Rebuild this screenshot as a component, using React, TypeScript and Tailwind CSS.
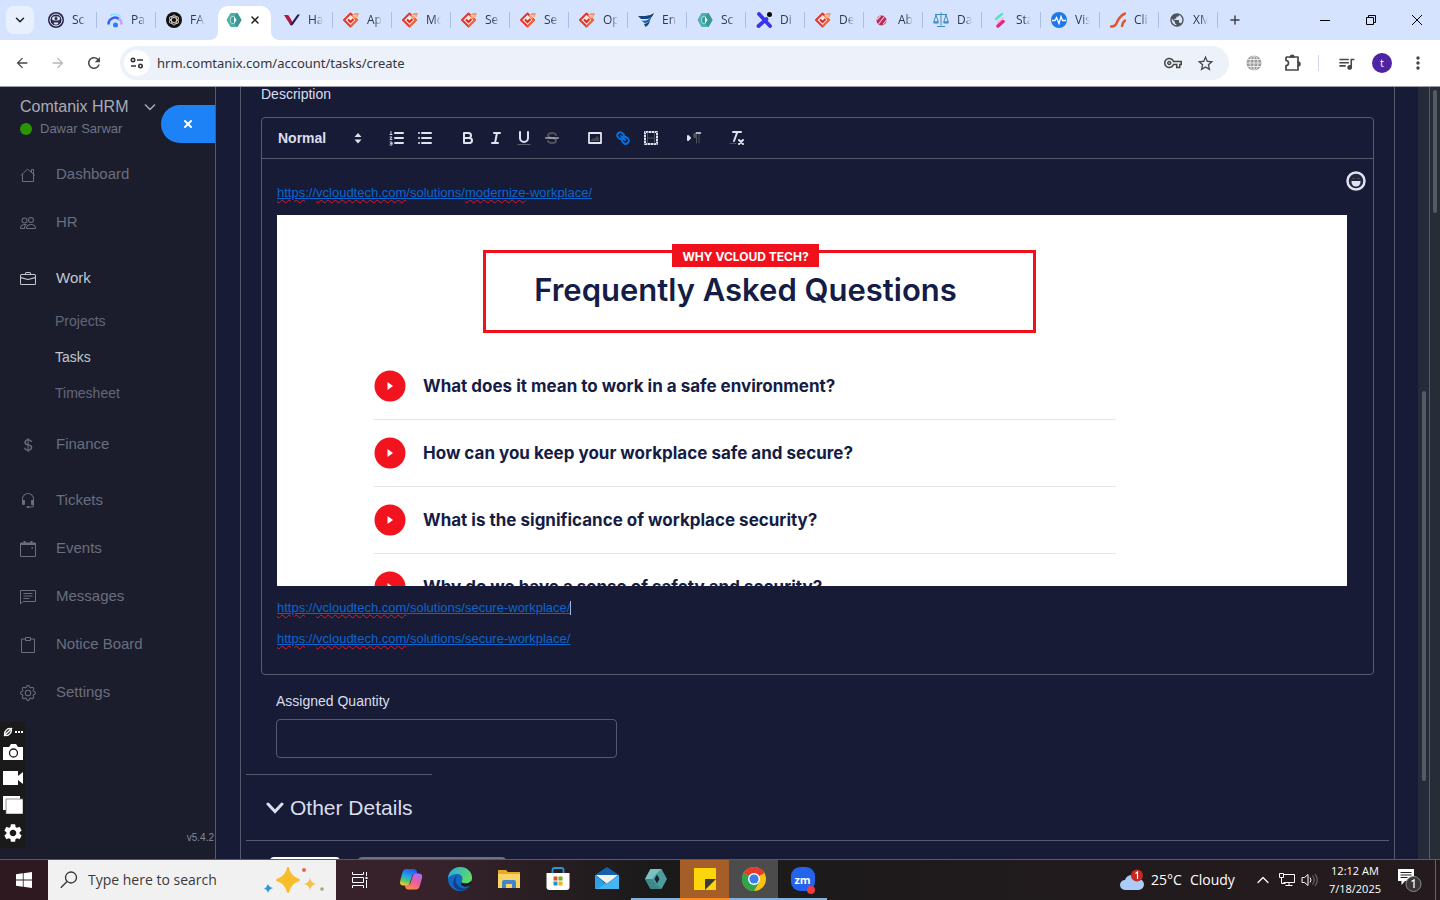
import type { ReactNode } from "react";
import { BsBriefcase, BsCurrencyDollar, BsGear, BsHeadset, BsPeople } from "react-icons/bs";
import {
  MdArrowBack,
  MdArrowForward,
  MdMoreVert,
  MdOutlineVpnKey,
  MdPublic,
  MdQueueMusic,
  MdRefresh,
  MdSettings,
  MdStarBorder,
} from "react-icons/md";
import { ChevronDown, ChevronUp, Plus, X } from "lucide-react";

/* ---------- favicons ---------- */

const GitIcon = () => (
  <svg viewBox="0 0 16 16" className="size-4">
    <path d="M7.500 1.500 14 8l-6.500 6.500L1 8z" fill="#fbe9e4" stroke="#e2362f" strokeWidth="2" strokeLinejoin="round" />
    <path d="M7.500 14.500 14 8l-2.500-2.500" fill="none" stroke="#ee6a3c" strokeWidth="2" />
    <path d="M5 7.500l2.500 2.500L10.500 7" stroke="#de2b26" strokeWidth="2" fill="none" />
    <path d="M8.500 4 12 1h4l-1.500 4-3 1.500z" fill="#f39a6c" />
    <path d="M10 3.500h3.500M11 5h3" stroke="#fbe0d2" strokeWidth="0.700" />
  </svg>
);

const HexIcon = () => (
  <svg viewBox="0 0 16 16" className="size-4">
    <path d="M4.500 1h7L15.500 8l-4 7h-7L.5 8z" fill="#4fb0ac" />
    <path d="M11.500 1 15.500 8l-4 7-3.500-3 2.500-4L8 4z" fill="#3c9793" />
    <path d="M8 4a4 4 0 0 0 0 8l2.500-4z" fill="#eefafa" />
    <path d="M8 4.500a3.500 3.500 0 0 0 0 7z" fill="#3c9f9b" />
  </svg>
);

const RobotIcon = () => (
  <svg viewBox="0 0 16 16" className="size-4">
    <circle cx="8" cy="8" r="8" fill="#25284f" />
    <circle cx="8" cy="8" r="6" fill="none" stroke="#e8eaf5" strokeWidth="1" />
    <path d="M4 6.500Q4 4.500 6 4.500h4q2 0 2 2t-2 2H6q-2 0-2-2z" fill="#e8eaf5" />
    <path d="M5.500 10.500h5l-1 2h-3z" fill="#e8eaf5" />
    <circle cx="8" cy="6.500" r="1.500" fill="#25284f" />
  </svg>
);

const GaugeIcon = () => (
  <svg viewBox="0 0 16 16" className="size-4">
    <path d="M1.500 12.500a6.500 6.500 0 0 1 11-5" fill="none" stroke="#2f62f5" strokeWidth="2.500" />
    <path d="M11.500 6.500a6.500 6.500 0 0 1 3 6" fill="none" stroke="#c9a0f5" strokeWidth="2.500" />
    <path d="M3 3.500Q8 .5 14 4.500" fill="none" stroke="#8fe0fa" strokeWidth="1.500" />
    <circle cx="8.500" cy="13" r="2.500" fill="#2b7df7" />
  </svg>
);

const GptIcon = () => (
  <svg viewBox="0 0 16 16" className="size-4">
    <circle cx="8" cy="8" r="8" fill="#111" />
    <g fill="none" stroke="#d8cfc4" strokeWidth="0.900">
      <ellipse cx="8" cy="8" rx="2.500" ry="5" />
      <ellipse cx="8" cy="8" rx="2.500" ry="5" transform="rotate(60 8 8)" />
      <ellipse cx="8" cy="8" rx="2.500" ry="5" transform="rotate(120 8 8)" />
    </g>
  </svg>
);

const VeeIcon = () => (
  <svg viewBox="0 0 16 16" className="size-4">
    <path d="M0 3h3.500q1 0 1.500 1l3.500 6-1 2.500q-.5 1-1.500 0z" fill="#b01743" />
    <path d="M13.500 2.500H16L9 12.500q-1.500 1.500-3 .5z" fill="#2a1a55" />
  </svg>
);

const WingIcon = () => (
  <svg viewBox="0 0 16 16" className="size-4">
    <path d="M0 4h7q5 0 9-3-2 6-8 6H3z" fill="#15447c" />
    <path d="M3.500 8.500q7 1 10-4-1 6-7 6.500z" fill="#1e5d9c" />
    <path d="M6 12q4-.5 6-4-.5 5-4.500 7z" fill="#15447c" />
  </svg>
);

const CrossIcon = () => (
  <svg viewBox="0 0 16 16" className="size-4">
    <path d="M3 2l11 12M10.500 7 2.500 14" stroke="#3a35ec" strokeWidth="3.800" strokeLinecap="round" />
    <circle cx="13.500" cy="2.500" r="2.500" fill="#0a0a0a" />
  </svg>
);

const BallIcon = () => (
  <svg viewBox="0 0 16 16" className="size-4">
    <circle cx="7.500" cy="8.500" r="5" fill="#b8295a" />
    <path d="M4.500 12 10.500 4.500M2.500 8l4-4M9 12.500 12.500 8" stroke="#f2c6d6" strokeWidth="1.200" />
  </svg>
);

const ScalesIcon = () => (
  <svg viewBox="0 0 16 16" className="size-4" fill="none" stroke="#3f8dbb">
    <path d="M8 .5v13M2 2.500h12M4 14.500h8M3 3 .8 10h4.600L3 3M13 3l-2.200 7h4.600L13 3" />
    <path d="M.5 10.500h5M10.500 10.500h5" strokeWidth="2" />
  </svg>
);

const StrokeIcon = () => (
  <svg viewBox="0 0 16 16" className="size-4" strokeLinecap="round">
    <path d="M4 7 10 2" stroke="#5adfc6" strokeWidth="2.500" />
    <path d="M5.500 10.500 11 6" stroke="#f3bdd9" strokeWidth="2" />
    <path d="M6 14 11 9.500" stroke="#e3258c" strokeWidth="3.500" />
  </svg>
);

const PulseIcon = () => (
  <svg viewBox="0 0 16 16" className="size-4">
    <circle cx="8" cy="8" r="8" fill="#1f78ea" />
    <path d="M1 8.500h3l1.500-3 2.500 6 2-7 1.500 4H15" fill="none" stroke="#fff" strokeWidth="1.300" />
  </svg>
);

const FlameIcon = () => (
  <svg viewBox="0 0 16 16" className="size-4" fill="none" stroke="#e0562c" strokeLinecap="round">
    <path d="M1 14.500c6 0 5-4 8-8 2-3 3-4 6-5" strokeWidth="2.500" />
    <path d="M12 14c1-2 0-3 3-5.500" strokeWidth="2.500" />
  </svg>
);

const tabs: { title: string; icon: ReactNode; active?: boolean }[] = [
  { title: "Sc", icon: <RobotIcon /> },
  { title: "Pa", icon: <GaugeIcon /> },
  { title: "FA", icon: <GptIcon /> },
  { title: "", icon: <HexIcon />, active: true },
  { title: "Ha", icon: <VeeIcon /> },
  { title: "Ap", icon: <GitIcon /> },
  { title: "Mo", icon: <GitIcon /> },
  { title: "Se", icon: <GitIcon /> },
  { title: "Se", icon: <GitIcon /> },
  { title: "Op", icon: <GitIcon /> },
  { title: "En", icon: <WingIcon /> },
  { title: "Sc", icon: <HexIcon /> },
  { title: "Di", icon: <CrossIcon /> },
  { title: "De", icon: <GitIcon /> },
  { title: "Ab", icon: <BallIcon /> },
  { title: "Da", icon: <ScalesIcon /> },
  { title: "Sta", icon: <StrokeIcon /> },
  { title: "Vis", icon: <PulseIcon /> },
  { title: "Cli", icon: <FlameIcon /> },
  { title: "XM", icon: <MdPublic className="size-4 text-[#4b5258]" /> },
];

const TabStrip = () => (
  <div className="flex h-10 shrink-0 items-center bg-[#d5e3ff] pl-1.5 font-['Open_Sans',sans-serif] text-[#30384a]">
    <button aria-label="Search tabs" className="mr-1 flex size-7 items-center justify-center rounded-lg bg-[#e9f0fd]">
      <ChevronDown className="size-3.5 text-[#1f1f1f]" strokeWidth={2.5} />
    </button>
    {tabs.map((tab, i) =>
      tab.active ? (
        <div key={i} className="relative flex h-10 w-[59px] items-end px-[3px]">
          <div className="flex h-[34px] flex-1 items-center justify-between rounded-t-[10px] bg-white pr-2.5 pb-1.5 pl-2">
            {tab.icon}
            <button aria-label="Close tab">
              <X className="size-3 text-[#1f1f1f]" strokeWidth={3} />
            </button>
          </div>
          <svg viewBox="0 0 8 8" className="absolute bottom-0 -left-[5px] size-2">
            <path d="M8 0v8H0a8 8 0 0 0 8-8" fill="#fff" />
          </svg>
          <svg viewBox="0 0 8 8" className="absolute -right-[5px] bottom-0 size-2">
            <path d="M0 0v8h8a8 8 0 0 1-8-8" fill="#fff" />
          </svg>
        </div>
      ) : (
        <div key={i} className="flex h-10 w-[59px] items-center pl-2.5">
          {tab.icon}
          <span className="ml-2 w-[15px] overflow-hidden text-xs whitespace-nowrap [mask-image:linear-gradient(to_right,black_50%,transparent)]">
            {tab.title}
          </span>
          <span className={`ml-auto h-4 w-px ${i === 2 ? "bg-transparent" : "bg-[#a9bfe6]"}`} />
        </div>
      ),
    )}
    <button aria-label="New tab" className="ml-2.5 text-[#3c4043]">
      <Plus className="size-3.5" strokeWidth={2.5} />
    </button>
    <div className="ml-auto flex text-black">
      <button aria-label="Minimize" className="flex h-10 w-[46px] items-center justify-center">
        <span className="h-px w-2.5 bg-black" />
      </button>
      <button aria-label="Restore" className="flex h-10 w-[46px] items-center justify-center">
        <svg viewBox="0 0 10 10" className="size-2.5" fill="none" stroke="#000">
          <path d="M.5 2.500h7v7h-7zM2.500 2.500v-2h7v7h-2" />
        </svg>
      </button>
      <button aria-label="Close" className="flex h-10 w-[46px] items-center justify-center">
        <svg viewBox="0 0 10 10" className="size-2.5" stroke="#000">
          <path d="M0 0l10 10M10 0 0 10" />
        </svg>
      </button>
    </div>
  </div>
);

const AddressBar = () => (
  <div className="flex h-[47px] shrink-0 items-center border-b border-[#9a9ca6] bg-white px-3 text-[#474747]">
    <button aria-label="Back" className="mr-4 p-0.5"><MdArrowBack className="size-4" /></button>
    <button aria-label="Forward" className="mr-4 p-0.5 text-[#b5b7bb]"><MdArrowForward className="size-4" /></button>
    <button aria-label="Reload" className="mr-4 p-px"><MdRefresh className="size-[18px]" /></button>
    <div className="flex h-[34px] flex-1 items-center rounded-full bg-[#edf1fa] pr-3.5 pl-1">
      <span className="flex size-[26px] items-center justify-center rounded-full bg-white">
        <svg viewBox="0 0 14 12" className="h-3 w-3.5" fill="none" stroke="#333" strokeWidth="1.600">
          <circle cx="3" cy="3" r="1.700" />
          <path d="M7 3h6M1 9h5" />
          <circle cx="10.500" cy="9" r="1.700" />
        </svg>
      </span>
      <input
        aria-label="Address"
        defaultValue="hrm.comtanix.com/account/tasks/create"
        className="ml-[7px] flex-1 bg-transparent pt-0.5 font-['Noto_Sans',sans-serif] text-[13px] text-[#33363b] outline-none"
      />
      <button aria-label="Passwords" className="mr-3.5"><MdOutlineVpnKey className="size-[18px]" /></button>
      <button aria-label="Bookmark"><MdStarBorder className="size-[19px]" /></button>
    </div>
    <button aria-label="Site extension" className="ml-[17px]">
      <svg viewBox="0 0 16 16" className="size-4">
        <circle cx="8" cy="8" r="7.500" fill="#9b9b9b" />
        <g fill="none" stroke="#f0f0f0" strokeWidth="0.900">
          <path d="M.5 8h15M1.500 4.500h13M1.500 11.500h13M8 .5v15" />
          <ellipse cx="8" cy="8" rx="4" ry="7.500" />
        </g>
      </svg>
    </button>
    <button aria-label="Extensions" className="ml-[22px]">
      <svg viewBox="0 0 18 18" className="size-[18px]" fill="none" stroke="#474747" strokeWidth="1.700" strokeLinejoin="round">
        <path d="M2 3h12v5.500M2 3v3.500a2.300 2.300 0 0 1 0 5V16h12v-4.500" />
        <path d="M6.500 3a1.700 1.700 0 0 1 3.400 0zM14 8a1.900 1.900 0 0 1 0 3.800z" fill="#474747" />
      </svg>
    </button>
    <span className="ml-4 h-4 w-px bg-[#cfdaf0]" />
    <button aria-label="Media" className="ml-[18px]"><MdQueueMusic className="size-[19px]" /></button>
    <button className="ml-4 flex size-5 items-center justify-center rounded-full bg-[#4c24a4] font-['Open_Sans',sans-serif] text-[11px] text-white">t</button>
    <button aria-label="Menu" className="ml-4"><MdMoreVert className="size-5" /></button>
  </div>
);

/* ---------- sidebar ---------- */

const HouseIcon = () => (
  <svg viewBox="0 0 16 16" className="size-4" fill="none" stroke="currentColor">
    <path d="M2.500 7v7.500h11V7M1 8.500l6.500-6.500L15 8.500M11.500 5V2.500h2V7" />
  </svg>
);
const CalendarIcon = () => (
  <svg viewBox="0 0 16 16" className="size-4" fill="none" stroke="currentColor">
    <path d="M.5 2h15v13.500H.5z" />
    <path d="M.5 3h15M4.500 0v2M11.500 0v2" strokeWidth="2" />
    <path d="M11.500 7h1.500" strokeWidth="1.500" />
  </svg>
);
const MessageIcon = () => (
  <svg viewBox="0 0 16 16" className="size-4" fill="none" stroke="currentColor">
    <path d="M.5 1.500h15v11H3L.5 15zM3.500 4.500h9M3.500 7h9M3.500 9.500h6" />
  </svg>
);
const ClipboardIcon = () => (
  <svg viewBox="0 0 16 16" className="size-4" fill="none" stroke="currentColor">
    <path d="M5 2H1.500v13.500h13V2H11M5.500.5h5v3h-5z" />
  </svg>
);

const topMenu = [
  { label: "Dashboard", icon: <HouseIcon /> },
  { label: "HR", icon: <BsPeople className="size-4" /> },
];
const workMenu = ["Projects", "Tasks", "Timesheet"];
const bottomMenu = [
  { label: "Tickets", icon: <BsHeadset className="size-4" /> },
  { label: "Events", icon: <CalendarIcon /> },
  { label: "Messages", icon: <MessageIcon /> },
  { label: "Notice Board", icon: <ClipboardIcon /> },
  { label: "Settings", icon: <BsGear className="size-4" /> },
];

const MenuLink = ({ label, icon, active }: { label: string; icon: ReactNode; active?: boolean }) => (
  <a href="#" className={`flex h-12 items-center pl-5 text-[15px] ${active ? "text-[#c3c7d0]" : "text-[#6a6e7e]"}`}>
    <span className="mt-0.5 mr-5">{icon}</span>
    {label}
  </a>
);

const Sidebar = () => (
  <aside className="relative flex w-[216px] shrink-0 flex-col border-r border-[#565a6c] bg-[#1b1d2c]">
    <div className="flex h-[63px] justify-between pt-2.5">
      <div className="pl-5">
        <button className="flex items-center text-base leading-5 text-[#aaacb4]">
          Comtanix HRM
          <svg viewBox="0 0 12 8" className="ml-4 h-2 w-3" fill="none" stroke="currentColor" strokeWidth="1.500">
            <path d="M1 1.500l5 5 5-5" />
          </svg>
        </button>
        <p className="mt-0.5 flex items-center text-[13px] leading-5 text-[#6f7383]">
          <span className="mr-2 size-3 rounded-full bg-[#2a9500]" />
          Dawar Sarwar
        </p>
      </div>
      <button aria-label="Close menu" className="mt-2 flex h-[38px] w-[54px] items-center justify-center rounded-l-full bg-[#1d82f5] text-white">
        <X className="size-3" strokeWidth={4} />
      </button>
    </div>
    <nav>
      {topMenu.map((item) => (
        <MenuLink key={item.label} {...item} />
      ))}
      <div className="mt-2 pb-px">
        <MenuLink label="Work" icon={<BsBriefcase className="size-4" />} active />
        <div className="pt-px">
          {workMenu.map((item) => (
            <a
              key={item}
              href="#"
              className={`flex h-9 items-center pl-[55px] text-sm ${item === "Tasks" ? "text-[#c3c7d0]" : "text-[#62667a]"}`}
            >
              {item}
            </a>
          ))}
        </div>
      </div>
      <div className="my-2">
        <MenuLink label="Finance" icon={<BsCurrencyDollar className="size-4" />} />
      </div>
      {bottomMenu.map((item) => (
        <MenuLink key={item.label} {...item} />
      ))}
    </nav>
    <span className="mt-auto pr-px pb-3.5 text-right text-[10px] text-[#85889a]">v5.4.2</span>

    {/* floating screen recorder */}
    <div className="absolute bottom-[11px] left-0 flex w-[25px] flex-col items-center gap-2.5 bg-[#1b1a1a] pt-1 pb-1 text-white">
      <div className="-mb-1 flex h-3 items-center gap-0.5">
        <svg viewBox="0 0 10 10" className="size-2.5" fill="none" stroke="#fff" strokeWidth="1.400">
          <ellipse cx="5" cy="5" rx="2.500" ry="4" transform="rotate(40 5 5)" />
          <path d="M1 9 9 1" />
        </svg>
        <svg viewBox="0 0 8 2" className="h-0.5 w-2" fill="#fff">
          <path d="M0 0h2v2H0zM3 0h2v2H3zM6 0h2v2H6z" />
        </svg>
      </div>
      <button aria-label="Screenshot">
        <svg viewBox="0 0 20 16" className="h-4 w-5">
          <path d="M0 3h6l2-3h5l2 3h5v13H0z" fill="#fff" />
          <circle cx="10.500" cy="9" r="4" fill="none" stroke="#1b1a1a" strokeWidth="1.300" />
        </svg>
      </button>
      <button aria-label="Record">
        <svg viewBox="0 0 20 16" className="h-4 w-5" fill="#fff">
          <path d="M0 1h15v5l5-4v12l-5-4v5H0z" />
        </svg>
      </button>
      <button aria-label="Windows">
        <svg viewBox="0 0 20 18" className="h-[18px] w-5">
          <path d="M0 0h17v14H0z" fill="#fff" />
          <path d="M3 3h17v15H3z" fill="#fff" stroke="#777" strokeWidth="0.800" />
        </svg>
      </button>
      <button aria-label="Recorder settings" className="-mt-0.5"><MdSettings className="size-[22px]" /></button>
    </div>
  </aside>
);

/* ---------- editor ---------- */

const ToolButton = ({ label, children }: { label: string; children: ReactNode }) => (
  <button type="button" aria-label={label} className="flex h-6 w-7 items-center justify-center">
    <svg viewBox="0 0 18 18" className="size-[18px]" fill="none" stroke="#e0e3f2" strokeWidth="2" strokeLinecap="round" strokeLinejoin="round">
      {children}
    </svg>
  </button>
);

const Toolbar = () => (
  <div className="flex h-[41px] items-center gap-[15px] border-b border-[#565a6c] px-2">
    <div className="relative w-[98px]">
      <select aria-label="Text style" className="w-full appearance-none bg-transparent pl-2 text-sm font-bold text-[#dadeee] outline-none">
        <option>Normal</option>
      </select>
      <svg viewBox="0 0 8 12" className="pointer-events-none absolute top-1 right-1.5 h-3 w-2" fill="#e0e3f2">
        <path d="M.5 5 4 1l3.500 4zM.5 7.500 4 11.500l3.500-4z" />
      </svg>
    </div>
    <div className="flex">
      <ToolButton label="Ordered list">
        <path d="M7 4h8M7 9h8M7 14h8" />
        <path d="M3 2.500v3M2 5.500h2M2 8h2l-2 2.500h2M2 13h2v3H2M2.500 14.500H4" strokeWidth="0.900" />
      </ToolButton>
      <ToolButton label="Bullet list">
        <path d="M6 4h9M6 9h9M6 14h9M3 4h0M3 9h0M3 14h0" />
      </ToolButton>
    </div>
    <div className="flex">
      <ToolButton label="Bold">
        <path d="M5 4h4.500a2.500 2.500 0 0 1 0 5H5zM5 9h5.500a2.500 2.500 0 0 1 0 5H5z" />
      </ToolButton>
      <ToolButton label="Italic">
        <path d="M7 4h6M5 14h6M8 14l2-10" />
      </ToolButton>
      <ToolButton label="Underline">
        <path d="M5 3v6a4 4 0 0 0 8 0V3" />
        <path d="M3 15.500h12" stroke="#5b6072" strokeWidth="1" />
      </ToolButton>
      <ToolButton label="Strike">
        <path d="M13 6c-.5-1.300-2-2-4-2C6.800 4 5 5 5 6.500 5 8 6.500 8.800 9 9s4 1 4 2.500S11.200 14 9 14s-3.500-.7-4-2" stroke="#50535a" />
        <path d="M2.500 9h13" strokeWidth="1" />
      </ToolButton>
    </div>
    <div className="flex">
      <ToolButton label="Image">
        <path d="M3 4h12v10H3z" strokeWidth="1.800" />
        <path d="M5 12v-1l2-2 1 1 3-3 2 2v3z" fill="#444750" stroke="none" />
      </ToolButton>
      <ToolButton label="Link">
        <g stroke="#0b6fd8">
          <path d="M7 7l4 4" />
          <path d="M8.900 4.577a3.476 3.476 0 0 1 .36 4.679A3.476 3.476 0 0 1 4.577 8.900C3.185 7.500 2.035 6.400 4.217 4.217S7.500 3.185 8.900 4.577Z" />
          <path d="M13.423 9.100a3.476 3.476 0 0 0-4.679-.36 3.476 3.476 0 0 0 .36 4.679c1.392 1.392 2.500 2.542 4.679.36S14.815 10.500 13.423 9.100Z" />
        </g>
      </ToolButton>
      <ToolButton label="Video">
        <path d="M3 3h12v12H3z" />
        <path d="M3 3h12v12H3z" stroke="#181b35" strokeWidth="1" strokeDasharray="1 2" strokeLinecap="butt" />
        <path d="M5.500 4v10M12.500 4v10M6 9h6" stroke="#50535a" strokeWidth="1" />
      </ToolButton>
    </div>
    <ToolButton label="Text direction">
      <path d="M3 7l2 2-2 2z" fill="#e0e3f2" strokeWidth="2" />
      <path d="M11 4a2.500 2.500 0 0 0 0 5zM11.500 4v10M14 4v10" stroke="#50535a" strokeWidth="1" fill="#50535a" />
      <path d="M11.500 4h4" strokeWidth="1.500" />
    </ToolButton>
    <ToolButton label="Clear formatting">
      <path d="M5 3h8M6 12l3.350-9M11 11l4 4M15 11l-4 4" />
      <path d="M2 14.500h6" stroke="#50535a" strokeWidth="1" />
    </ToolButton>
  </div>
);

const Typo = ({ children }: { children: ReactNode }) => (
  <span className="underline decoration-[#e0182f] decoration-wavy decoration-1 underline-offset-2">{children}</span>
);

const SolutionLink = ({ children }: { children: ReactNode }) => (
  <a href="#" className="text-[13px] text-[#0b66cf] underline underline-offset-1">
    <Typo>https</Typo>://<Typo>vcloudtech.com</Typo>/solutions/{children}/
  </a>
);

const questions = [
  "What does it mean to work in a safe environment?",
  "How can you keep your workplace safe and secure?",
  "What is the significance of workplace security?",
  "Why do we have a sense of safety and security?",
];

const FaqPicture = () => (
  <div className="mr-[11px] h-[371px] overflow-hidden bg-white font-[Inter,sans-serif] text-[#151c45]">
    <div className="mx-auto w-[742px] -translate-x-[67px] pt-[35px]">
      <div className="mr-20 ml-[109px] h-[83px] border-3 border-[#f0111c] pr-7">
        <div className="-mt-[9px] flex flex-col items-center">
          <span className="flex h-[23px] w-[147px] items-center justify-center bg-[#f0111c] pt-0.5 text-xs font-bold text-white">WHY VCLOUD TECH?</span>
          <h2 className="text-[31px] leading-[45px] font-semibold whitespace-nowrap">Frequently Asked Questions</h2>
        </div>
      </div>
      <ul className="pt-5">
        {questions.map((question) => (
          <li key={question} className="flex h-[67px] items-center gap-[17px] border-b border-[#e6e6ea] text-[17px] font-bold">
            <svg viewBox="0 0 32 32" className="size-8">
              <circle cx="16" cy="16" r="15.500" fill="#f1141f" />
              <path d="M13.500 12v8l5.500-4z" fill="#fff" />
            </svg>
            {question}
          </li>
        ))}
      </ul>
    </div>
  </div>
);

const Editor = () => (
  <div className="rounded border border-[#565a6c]">
    <Toolbar />
    <div className="relative h-[515px] pt-[23px] pr-[15px] pl-[15px]">
      <button type="button" aria-label="Insert emoji" className="absolute top-3 right-[7px]">
        <svg viewBox="0 0 20 20" className="size-5">
          <circle cx="10" cy="10" r="8.500" fill="#25283a" stroke="#e0e3f2" strokeWidth="2.500" />
          <path d="M5.500 10h9v1a4.500 4.500 0 0 1-9 0z" fill="#e0e3f2" />
          <path d="M6.500 7.500h2M11.500 7.500h2" stroke="#565a6c" />
        </svg>
      </button>
      <p className="h-[33px] leading-5">
        <SolutionLink><Typo>modernize</Typo>-workplace</SolutionLink>
      </p>
      <FaqPicture />
      <p className="mt-3 flex h-[30px] items-start leading-5">
        <SolutionLink>secure-workplace</SolutionLink>
        <span className="mt-[3px] h-3.5 w-px bg-[#9eb8e0]" />
      </p>
      <p className="leading-5">
        <SolutionLink>secure-workplace</SolutionLink>
      </p>
    </div>
  </div>
);

const TaskForm = () => (
  <form className="mr-[23px] ml-6 min-w-0 flex-1 overflow-hidden border-x border-[#565a6c] text-sm text-[#dadeee]">
    <div className="px-5">
      <p className="h-[30px] leading-[15px]">Description</p>
      <Editor />
    </div>
    <div className="pt-4 pl-[35px]">
      <label htmlFor="quantity" className="block leading-5">Assigned Quantity</label>
      <input id="quantity" className="mt-2 block h-[39px] w-[341px] rounded border border-[#565a6c] bg-transparent px-3 outline-none" />
    </div>
    <div className="px-[5px]">
      <div className="mt-4 w-[186px] border-t border-[#565a6c]" />
      <h3 className="flex h-[65px] items-center pl-5 text-[21px]">
        <button type="button" className="flex items-center">
          <svg viewBox="0 0 18 12" className="mr-1.5 h-3 w-[18px]" fill="none" stroke="#dadeee" strokeWidth="3" strokeLinecap="round">
            <path d="M2 2l7 7.500L16 2" />
          </svg>
          Other Details
        </button>
      </h3>
      <div className="border-t border-[#565a6c]" />
    </div>
    <div className="flex gap-[18px] pt-4 pl-[29px]">
      <button type="button" aria-label="Save" className="h-9 w-[70px] rounded bg-white" />
      <button type="button" aria-label="Save and add more" className="h-9 w-[148px] rounded border-2 border-[#6d7182]" />
    </div>
  </form>
);

/* ---------- taskbar ---------- */

const apps: { name: string; className?: string; icon: ReactNode }[] = [
  {
    name: "Copilot",
    icon: (
      <svg viewBox="0 0 24 24" className="size-6">
        <defs>
          <linearGradient id="copilotA" x1="0.600" y1="0" x2="0.300" y2="1">
            <stop offset="0" stopColor="#2458e8" />
            <stop offset="0.450" stopColor="#22a6ee" />
            <stop offset="0.700" stopColor="#4fc36f" />
            <stop offset="1" stopColor="#f0cf2e" />
          </linearGradient>
          <linearGradient id="copilotB" x1="0.700" y1="0" x2="0.300" y2="1">
            <stop offset="0" stopColor="#a86af0" />
            <stop offset="0.500" stopColor="#ee5d9c" />
            <stop offset="1" stopColor="#fb8a4a" />
          </linearGradient>
        </defs>
        <path d="M7 2h8q2 0 2.600 2l.9 3h-3q-2 0-2.500 2l-2.200 7q-.6 2.500-3 2.500H4.500q-4.500 0-3.200-5l2-7.500Q4.500 2 7 2z" fill="url(#copilotA)" />
        <path d="M17 22.500H9q-2 0-2.600-2L5.800 18H9q2 0 2.500-2l2.200-7q.6-2.500 3-2.500h3q4.500 0 3.200 5l-2 7q-1 4-3.900 4z" fill="url(#copilotB)" />
      </svg>
    ),
  },
  {
    name: "Edge",
    icon: (
      <svg viewBox="0 0 24 24" className="size-6">
        <defs>
          <linearGradient id="edgeA" x1="0" y1="0" x2="1" y2="0.400">
            <stop offset="0" stopColor="#24a8e8" />
            <stop offset="1" stopColor="#5fd96a" />
          </linearGradient>
        </defs>
        <circle cx="12" cy="12" r="12" fill="#1467c0" />
        <path d="M0 11C1 4 6 0 12 0c7 0 12 5 12 10.500 0 4-3 6-6.500 6-2.500 0-4-1-4-2 0-.7 1-1 1-3C14.500 9 12 7 9 7 5 7 1.500 9 0 11z" fill="url(#edgeA)" />
        <path d="M9.500 9C6 12 7.500 18 12 20.500c3 1.700 7 1.500 10-2C18 24 12 24.500 8 21.500 4 18.500 4.500 11 9.500 9z" fill="#0e3f88" />
        <path d="M13.500 14.500c0 1 1.500 2 4 2 2.500 0 4.500-1 5.700-2.700L24 15l-1.500 3.500L17 20l-4-2z" fill="#26181d" />
      </svg>
    ),
  },
  {
    name: "File Explorer",
    icon: (
      <svg viewBox="0 0 24 24" className="size-6">
        <path d="M1 3h8l2 2h12v16H1z" fill="#e8a92a" />
        <path d="M1 7h22v14H1z" fill="#fbd468" />
        <path d="M5 21v-6q0-2 2-2h10q2 0 2 2v6h-4v-4H9v4z" fill="#3f87cc" />
      </svg>
    ),
  },
  {
    name: "Store",
    icon: (
      <svg viewBox="0 0 24 24" className="size-6">
        <path d="M6.500 7V3q0-2 2-2h7q2 0 2 2v4" fill="none" stroke="#2a96d8" strokeWidth="1.800" />
        <path d="M.5 6h23v14q0 3-3 3h-17q-3 0-3-3z" fill="#fff" />
        <path d="M7.500 9.500h4v4h-4z" fill="#e8502c" />
        <path d="M12.500 9.500h4v4h-4z" fill="#72ad22" />
        <path d="M7.500 14.500h4v4h-4z" fill="#2290d4" />
        <path d="M12.500 14.500h4v4h-4z" fill="#f0b41e" />
      </svg>
    ),
  },
  {
    name: "Mail",
    icon: (
      <svg viewBox="0 0 24 24" className="size-6">
        <path d="M0 8 12 0l12 8v6H0z" fill="#1561ad" />
        <path d="M1 8h22l-11 9z" fill="#f4f2ee" />
        <path d="M0 8l12 9.500L24 8v14H0z" fill="#2aa2e8" />
        <path d="M24 8v14H2z" fill="#5cc3f5" opacity="0.600" />
      </svg>
    ),
  },
  {
    name: "HRM",
    className: "border-[#7fb3e0]",
    icon: (
      <svg viewBox="0 0 24 24" className="size-6">
        <path d="M6.500 2h11L23 12l-5.500 10h-11L1 12z" fill="#4f9c9e" />
        <path d="M6.500 2 1 12h7l5-6 4.500-4z" fill="#7cc0c0" />
        <path d="M6.500 22 1 12h7l5 6 4.500 4z" fill="#3f878b" />
        <path d="M13 7.500 10.500 12l2.500 4.500 2.500-4.500z" fill="#12262b" />
      </svg>
    ),
  },
  {
    name: "Sticky Notes",
    className: "border-[#ff8a1e] bg-[#a65e28]",
    icon: (
      <svg viewBox="0 0 24 24" className="size-6">
        <path d="M1 1h22v22H1z" fill="#fbd60c" />
        <path d="M12 12h11L12 23z" fill="#3b3b3b" />
      </svg>
    ),
  },
  {
    name: "Chrome",
    className: "border-[#7fb3e0] bg-[#4c4c4d]",
    icon: (
      <svg viewBox="0 0 24 24" className="size-6">
        <circle cx="12" cy="12" r="12" fill="#fbc116" />
        <path d="M12 12 1.600 6A12 12 0 0 1 22.400 6z" fill="#e33b2e" />
        <path d="M1.600 6A12 12 0 0 0 12 24l5.200-9L12 12z" fill="#2da44e" />
        <circle cx="12" cy="12" r="6" fill="#fff" />
        <circle cx="12" cy="12" r="4.600" fill="#3b7ded" />
      </svg>
    ),
  },
];

const Taskbar = () => (
  <footer className="flex h-10 shrink-0 bg-linear-to-r from-[#37222b] from-30% via-[#1b1a1b] via-45% to-[#251b1e] font-['Open_Sans',sans-serif] text-white">
    <button aria-label="Start" className="flex w-12 items-center justify-center bg-[#2e1920]">
      <svg viewBox="0 0 16 16" className="size-4" fill="#fff">
        <path d="M0 2.300 6.800 1.300v6.300H0zM7.600 1.200 16 0v7.600H7.600zM0 8.400h6.800v6.300L0 13.700zM7.600 8.400H16V16l-8.400-1.200z" />
      </svg>
    </button>
    <label className="flex w-72 items-center bg-[#f1f1f1] pr-2 pl-3 text-[#3a3a3a]">
      <svg viewBox="0 0 18 18" className="size-[18px]" fill="none" stroke="#333" strokeWidth="1.300">
        <circle cx="11" cy="6.500" r="5.500" />
        <path d="M7 10.500.8 16.800" />
      </svg>
      <input
        aria-label="Search"
        placeholder="Type here to search"
        className="ml-2.5 w-40 bg-transparent text-sm outline-none placeholder:text-[#3a3a3a]"
      />
      <svg viewBox="0 0 64 32" className="ml-auto h-8 w-16">
        <path d="M24 4q2 9 11 12-9 3-11 12-2-9-11-12 9-3 11-12z" fill="#f8bd2a" stroke="#f8bd2a" strokeWidth="2" strokeLinejoin="round" />
        <path d="M46 14q1 5 6 6-5 1-6 6-1-5-6-6 5-1 6-6z" fill="#f5c04a" />
        <path d="M4 20q1 3 5 4-4 1-5 5-1-4-4-4 3-2 4-5z" fill="#2d98d8" />
        <circle cx="40" cy="6" r="2" fill="#e06c4a" />
        <circle cx="58" cy="25" r="1.800" fill="#a0a86a" />
      </svg>
    </label>
    <button aria-label="Task view" className="mr-0.5 flex w-12 items-center justify-center">
      <svg viewBox="0 0 16 16" className="size-4" fill="none" stroke="#fff">
        <path d="M.5 0v2.500h11V0M.5 5.500h11v5H.5zM.5 16v-2.500h11V16M14.500 0v4M14.500 8v8" />
        <path d="M13.500 6h2" strokeWidth="2" />
      </svg>
    </button>
    {apps.map((app) => (
      <button
        key={app.name}
        aria-label={app.name}
        className={`flex w-[49px] items-center justify-center border-b-2 ${app.className ?? "border-transparent"}`}
      >
        {app.icon}
      </button>
    ))}
    <button aria-label="Zoom" className="relative flex w-[49px] items-center justify-center border-b-2 border-[#7fb3e0]">
      <span className="flex size-6 items-center justify-center rounded-[9px] bg-[#2463eb] text-[11px] leading-none font-bold">zm</span>
      <span className="absolute right-3 bottom-1 size-2 rounded-full bg-[#ee3a44]" />
    </button>

    <div className="ml-auto flex items-center">
      <button className="flex items-center text-sm">
        <svg viewBox="0 0 26 22" className="mr-1.5 h-[22px] w-[26px]">
          <path d="M6 21a5 5 0 0 1 0-10 7 7 0 0 1 13-1 5.500 5.500 0 0 1 1 11z" fill="#a9cdf8" />
          <circle cx="18" cy="6.500" r="6" fill="#c8281e" />
          <path d="M16.500 4.500 18.500 3v7" fill="none" stroke="#fff" strokeWidth="1.200" />
        </svg>
        25°C<span className="ml-2">Cloudy</span>
      </button>
      <button aria-label="Show hidden icons" className="ml-[18px]"><ChevronUp className="size-5" strokeWidth={1.5} /></button>
      <svg viewBox="0 0 16 14" className="ml-1.5 h-3.5 w-4" fill="none" stroke="#fff">
        <path d="M4.500 1.500h11v8h-11M10 9.500v3M6.500 12.500h7M.5.500h4v4h-4zM2.500 4.500v6h4" />
      </svg>
      <svg viewBox="0 0 18 14" className="ml-1.5 h-3.5 w-[18px]" fill="none" stroke="#fff">
        <path d="M1 4.500h2.500L7 1.500v11L3.500 9.500H1zM9 4.500q2 2.500 0 5" />
        <path d="M11.500 2.500q3.500 4.500 0 9M14 1q4.500 6 0 12" stroke="#77757a" />
      </svg>
      <div className="ml-2.5 text-center text-[11px] leading-[18px]">
        <p>12:12 AM</p>
        <p>7/18/2025</p>
      </div>
      <button aria-label="Notifications" className="mr-3 ml-4 flex">
        <svg viewBox="0 0 26 26" className="size-[26px]">
          <path d="M1 2h16v12H8l-3.500 4v-4H1z" fill="#fff" />
          <path d="M3.500 5.500h11M3.500 8h11M3.500 10.500h7" stroke="#251b1e" />
          <circle cx="16.500" cy="17" r="7.500" fill="#3a3637" stroke="#8b8889" />
          <path d="M14.500 14.500 17 13v8" fill="none" stroke="#fff" strokeWidth="1.300" />
        </svg>
      </button>
      <span className="mr-1 h-10 w-px bg-[#6a6466]" />
    </div>
  </footer>
);

export default function App() {
  return (
    <div className="flex h-screen flex-col overflow-hidden font-['Liberation_Sans',sans-serif]">
      <TabStrip />
      <AddressBar />
      <main className="flex min-h-0 flex-1 border-b border-[#565a6c] bg-[#181b35]">
        <Sidebar />
        <TaskForm />
        <div className="flex w-3 shrink-0 justify-center border-r border-[#565a6c] bg-[#252b38] pt-[304px]">
          <div className="h-[390px] w-1 rounded-full bg-[#555b64]" />
        </div>
        <div className="flex w-2.5 shrink-0 justify-center bg-[#272d37] pt-[3px]">
          <div className="h-[123px] w-1 rounded-full bg-[#565b63]" />
        </div>
      </main>
      <Taskbar />
    </div>
  );
}
